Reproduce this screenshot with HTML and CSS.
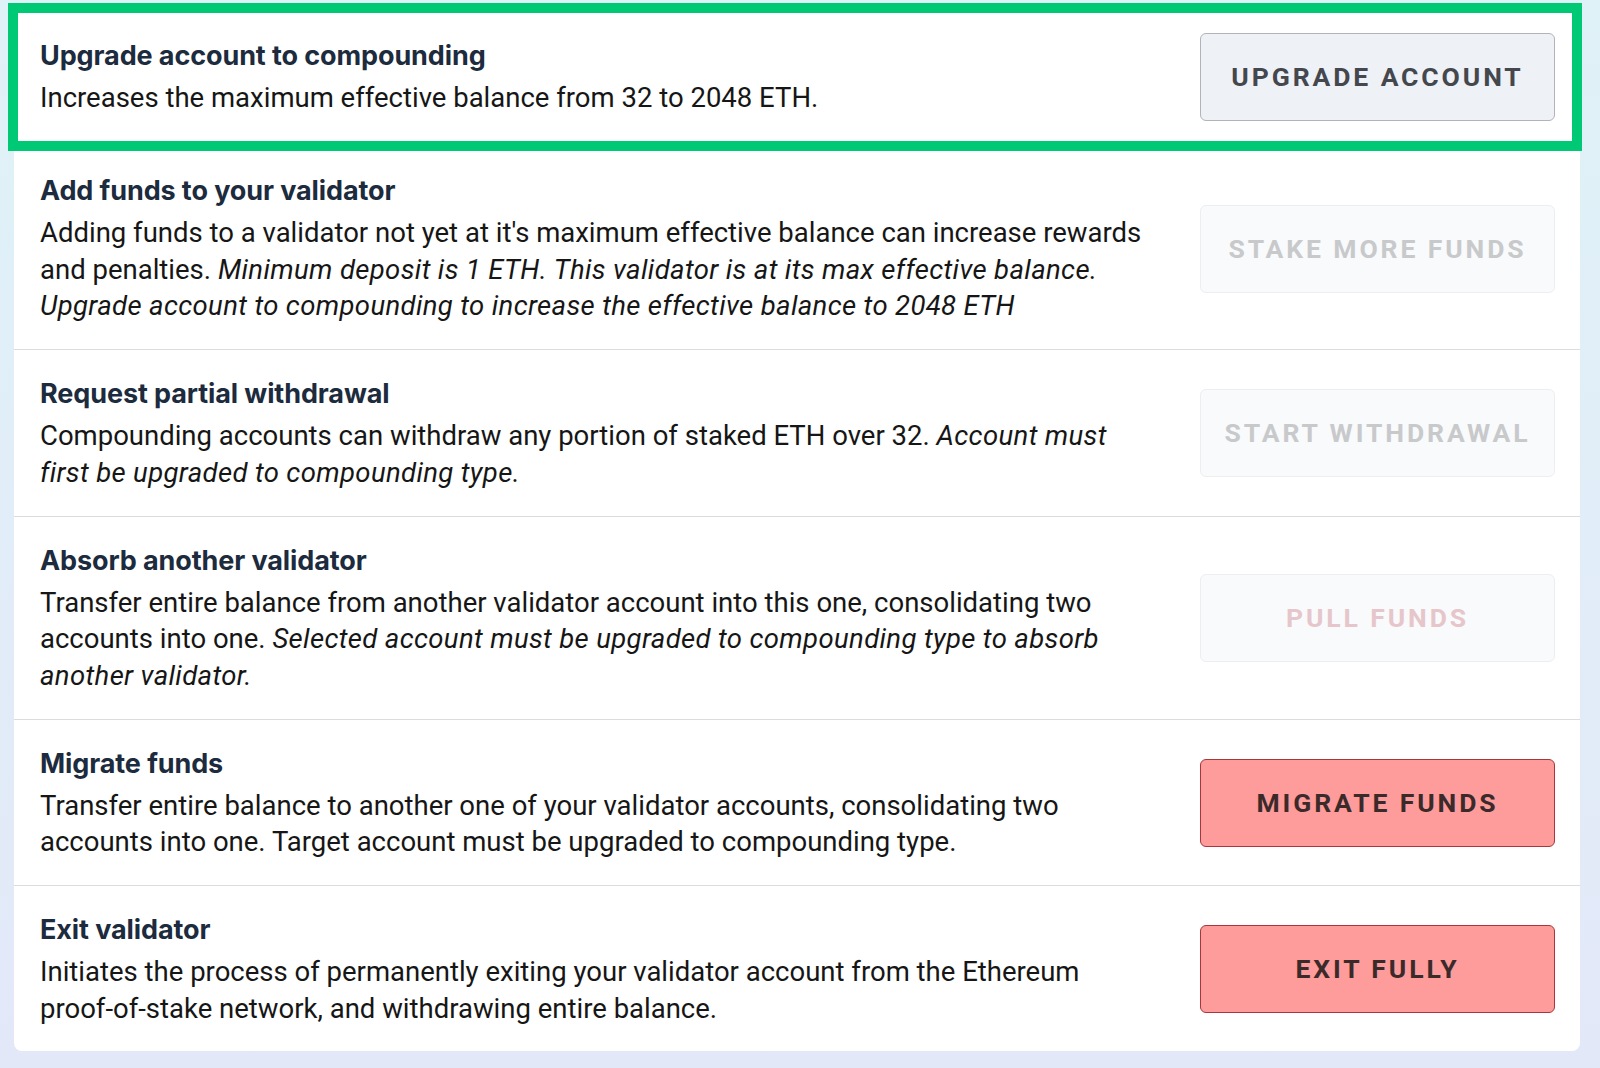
FILE: index.html
```html
<!DOCTYPE html>
<html lang="en">
<head>
<meta charset="utf-8">
<title>Validator actions</title>
<link rel="stylesheet" href="styles.css">
</head>
<body>
<div class="page">
  <div class="row row-highlight">
    <div class="text">
      <h3 class="title">Upgrade account to compounding</h3>
      <p class="desc">Increases the maximum effective balance from 32 to 2048 ETH.</p>
    </div>
    <button class="btn btn-neutral">UPGRADE ACCOUNT</button>
  </div>
  <div class="card">
    <div class="row row-first">
      <div class="text">
        <h3 class="title">Add funds to your validator</h3>
        <p class="desc">Adding funds to a validator not yet at it's maximum effective balance can increase rewards and penalties. <em>Minimum deposit is 1 ETH. This validator is at its max effective balance. Upgrade account to compounding to increase the effective balance to 2048 ETH</em></p>
      </div>
      <button class="btn btn-disabled">STAKE MORE FUNDS</button>
    </div>
    <div class="row">
      <div class="text">
        <h3 class="title">Request partial withdrawal</h3>
        <p class="desc">Compounding accounts can withdraw any portion of staked ETH over 32. <em>Account must first be upgraded to compounding type.</em></p>
      </div>
      <button class="btn btn-disabled">START WITHDRAWAL</button>
    </div>
    <div class="row">
      <div class="text">
        <h3 class="title">Absorb another validator</h3>
        <p class="desc">Transfer entire balance from another validator account into this one, consolidating two accounts into one. <em>Selected account must be upgraded to compounding type to absorb another validator.</em></p>
      </div>
      <button class="btn btn-disabled-danger">PULL FUNDS</button>
    </div>
    <div class="row">
      <div class="text">
        <h3 class="title">Migrate funds</h3>
        <p class="desc">Transfer entire balance to another one of your validator accounts, consolidating two accounts into one. Target account must be upgraded to compounding type.</p>
      </div>
      <button class="btn btn-danger">MIGRATE FUNDS</button>
    </div>
    <div class="row row-last">
      <div class="text">
        <h3 class="title">Exit validator</h3>
        <p class="desc">Initiates the process of permanently exiting your validator account from the Ethereum proof-of-stake network, and withdrawing entire balance.</p>
      </div>
      <button class="btn btn-danger">EXIT FULLY</button>
    </div>
  </div>
</div>
</body>
</html>
```

FILE: styles.css
```css
* { box-sizing: border-box; }
html, body { margin: 0; padding: 0; }
body {
  width: 1600px;
  height: 1068px;
  overflow: hidden;
  background: linear-gradient(180deg, #dff2f7 0%, #e1edf8 50%, #e3e8f8 100%);
  font-family: Roboto, "Liberation Sans", sans-serif;
}
.page {
  padding-top: 3px;
}
.card {
  margin-left: 14px;
  width: 1566px;
  background: #ffffff;
  border-radius: 0 0 8px 8px;
}
.row {
  display: flex;
  align-items: center;
  gap: 55px;
  padding: 25px 25px 24px 26px;
  border-bottom: 1px solid #dcdcdc;
}
.row-first { padding-top: 21px; }
.row-last { border-bottom: none; }
.row-highlight {
  position: relative;
  z-index: 1;
  margin-left: 8px;
  width: 1574px;
  border: 10px solid #00c975;
  background: #ffffff;
  padding: 20px 17px 20px 22px;
}
.text {
  flex: 1;
  min-width: 0;
}
.title {
  margin: 0 0 5px 0;
  font-family: Inter, "Noto Sans", sans-serif;
  font-weight: 700;
  font-size: 27px;
  line-height: 38px;
  color: #1c2b3d;
  letter-spacing: -0.1px;
}
.desc {
  margin: 0;
  font-size: 27.5px;
  line-height: 36.7px;
  color: #161616;
}
.desc em {
  font-style: italic;
  letter-spacing: 0.35px;
}
.btn {
  flex: 0 0 355px;
  width: 355px;
  height: 88px;
  border-radius: 6px;
  font-family: Roboto, "Liberation Sans", sans-serif;
  font-weight: 700;
  font-size: 26.5px;
  letter-spacing: 2.9px;
  text-align: center;
  padding: 0 0 1px 0;
  cursor: pointer;
}
.btn-neutral {
  background: #eef1f6;
  border: 1px solid #b1b3b8;
  color: #44474d;
}
.btn-disabled {
  background: #f9fafb;
  border: 1px solid #eceef1;
  color: #c8c9cb;
}
.btn-disabled-danger {
  background: #f9fafb;
  border: 1px solid #eceef1;
  color: #e6c6cb;
}
.btn-danger {
  background: #fe9b9b;
  border: 1px solid #a8363b;
  color: #3b2a2a;
}
```
